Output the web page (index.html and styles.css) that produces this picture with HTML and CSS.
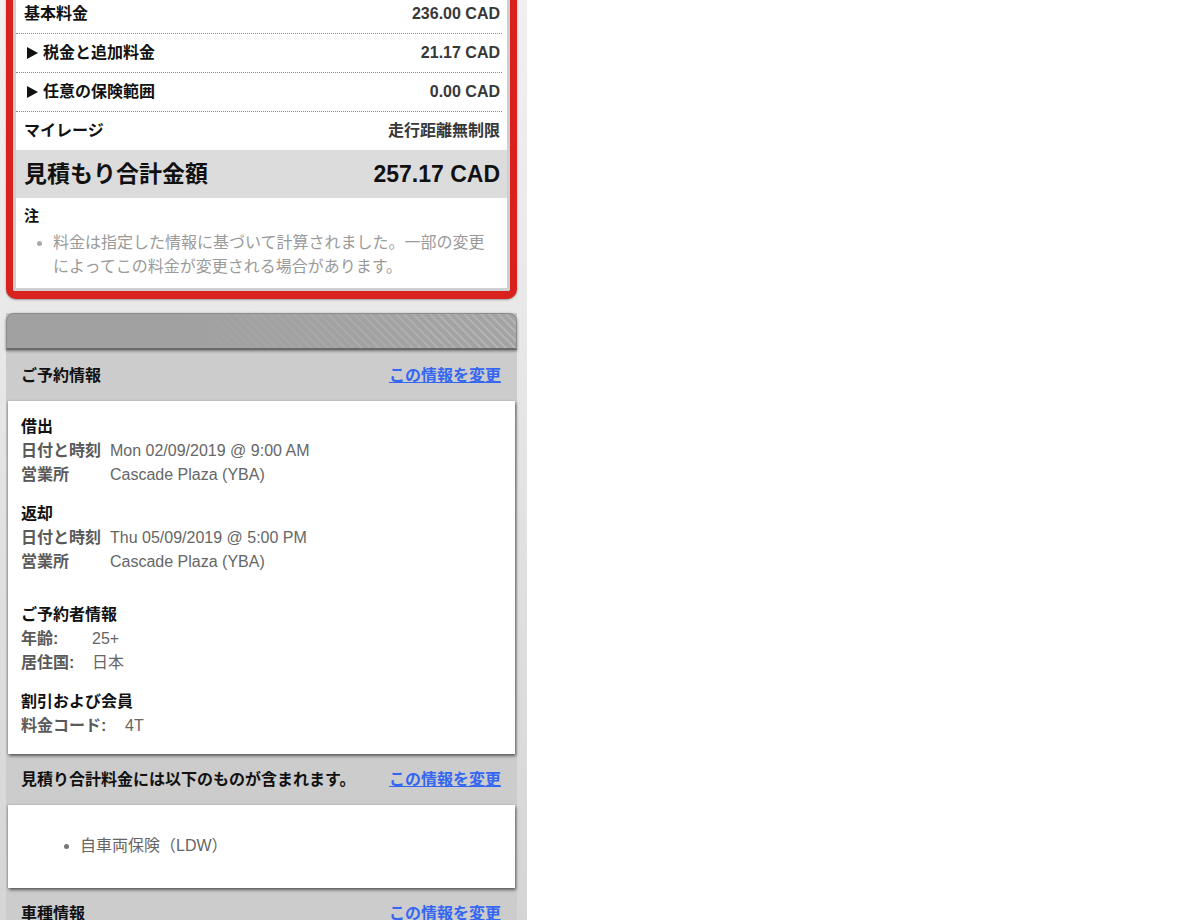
FILE: index.html
```html
<!DOCTYPE html>
<html lang="ja">
<head>
<meta charset="utf-8">
<title>見積もり</title>
<link rel="stylesheet" href="styles.css">
</head>
<body>
<div class="column">
  <section class="quote">
    <div class="quote-inner">
      <div class="fee-row"><span class="fee-label">基本料金</span><span class="fee-value">236.00 CAD</span></div>
      <div class="fee-row"><span class="fee-label toggle">税金と追加料金</span><span class="fee-value">21.17 CAD</span></div>
      <div class="fee-row"><span class="fee-label toggle">任意の保険範囲</span><span class="fee-value">0.00 CAD</span></div>
      <div class="fee-row last"><span class="fee-label">マイレージ</span><span class="fee-value">走行距離無制限</span></div>
      <div class="total-row"><span>見積もり合計金額</span><span>257.17 CAD</span></div>
      <div class="note">
        <div class="note-title">注</div>
        <ul class="note-list"><li>料金は指定した情報に基づいて計算されました。一部の変更によってこの料金が変更される場合があります。</li></ul>
      </div>
    </div>
  </section>

  <section class="panel">
    <div class="panel-bar"></div>
    <div class="panel-head"><h3>ご予約情報</h3><a href="#">この情報を変更</a></div>
    <div class="panel-body">
      <div class="info-block">
        <div class="info-title">借出</div>
        <div class="info-grid grid-rental">
          <span class="info-label">日付と時刻</span><span class="info-value">Mon 02/09/2019 @ 9:00 AM</span>
          <span class="info-label">営業所</span><span class="info-value">Cascade Plaza (YBA)</span>
        </div>
      </div>
      <div class="info-block gap-small">
        <div class="info-title">返却</div>
        <div class="info-grid grid-rental">
          <span class="info-label">日付と時刻</span><span class="info-value">Thu 05/09/2019 @ 5:00 PM</span>
          <span class="info-label">営業所</span><span class="info-value">Cascade Plaza (YBA)</span>
        </div>
      </div>
      <div class="info-block gap-large">
        <div class="info-title">ご予約者情報</div>
        <div class="info-grid grid-renter">
          <span class="info-label">年齢:</span><span class="info-value">25+</span>
          <span class="info-label">居住国:</span><span class="info-value">日本</span>
        </div>
      </div>
      <div class="info-block gap-small">
        <div class="info-title">割引および会員</div>
        <div class="info-grid grid-discount">
          <span class="info-label">料金コード:</span><span class="info-value">4T</span>
        </div>
      </div>
    </div>
    <div class="panel-head"><h3>見積り合計料金には以下のものが含まれます。</h3><a href="#">この情報を変更</a></div>
    <div class="panel-body compact">
      <ul class="included-list"><li>自車両保険（LDW）</li></ul>
    </div>
    <div class="panel-head"><h3>車種情報</h3><a href="#">この情報を変更</a></div>
  </section>
</div>
</body>
</html>
```

FILE: styles.css
```css
* { box-sizing: border-box; }
html, body { margin: 0; padding: 0; background: #fff; }
body {
  font-family: "Liberation Sans", "Noto Sans CJK JP", Arial, sans-serif;
  font-size: 16px;
  color: #111;
  overflow: hidden;
  height: 920px;
}

.column {
  width: 527px;
  min-height: 920px;
  padding: 0 10px 0 6px;
  background: linear-gradient(#f0f0f0 0, #e9e9e9 300px, #d5d5d5 920px);
  overflow: hidden;
}

/* Quote box */
.quote {
  margin-top: -12px;
  border: 7px solid #d9221d;
  border-bottom-width: 8px;
  border-radius: 0 0 10px 10px;
  background: #fff;
  box-shadow: 0 1px 2px rgba(0, 0, 0, .35);
}
.quote-inner {
  border: 3px solid #cfcfcf;
  border-top: 0;
  border-radius: 0 0 3px 3px;
  background: #fff;
}
.fee-row {
  display: flex;
  justify-content: space-between;
  align-items: center;
  padding: 8px 2px 8px 8px;
  margin-right: 5px;
  line-height: 22px;
  border-bottom: 1px dotted #8a8a8a;
}
.fee-row.last { border-bottom: 0; }
.fee-label { font-weight: bold; color: #111; }
.fee-value { font-weight: bold; color: #383838; }
.toggle::before {
  content: "";
  display: inline-block;
  width: 0;
  height: 0;
  border-top: 6px solid transparent;
  border-bottom: 6px solid transparent;
  border-left: 11px solid #111;
  margin: 0 5px 0 3px;
  vertical-align: -1px;
}
.total-row {
  display: flex;
  justify-content: space-between;
  align-items: center;
  padding: 8px 7px 8px 8px;
  background: #dcdcdc;
  font-size: 23px;
  font-weight: bold;
  line-height: 32px;
  color: #111;
}
.note { padding: 8px 14px 9px 8px; }
.note-title { font-size: 15px; font-weight: bold; line-height: 20px; color: #111; }
.note-list {
  margin: 5px 0 0;
  padding-left: 29px;
  color: #9a9a9a;
  line-height: 24px;
}
.note-list li::marker { color: #aaa; }

/* Panel */
.panel {
  margin-top: 14px;
  background: #cccccc;
}
.panel-bar {
  position: relative;
  z-index: 1;
  height: 37px;
  border: 1px solid #8c8c8c;
  border-bottom: 2px solid #6a6a6a;
  border-radius: 8px 8px 0 0;
  background:
    linear-gradient(to right, #a1a1a1 35%, rgba(161, 161, 161, 0) 100%),
    repeating-linear-gradient(45deg, #a3a3a3 0 4px, #b4b4b4 4px 6px);
  box-shadow: 0 1px 3px rgba(0, 0, 0, .45);
}
.panel-head {
  height: 51px;
  display: flex;
  align-items: center;
  justify-content: space-between;
  padding: 0 16px 3px 15px;
}
.panel-head h3 {
  margin: 0;
  font-size: 16px;
  font-weight: bold;
  color: #111;
}
.panel-head a {
  color: #3566f2;
  font-weight: bold;
  text-decoration: underline;
}
.panel-body {
  position: relative;
  z-index: 1;
  margin: 0 2px;
  padding: 14px 13px 16px;
  background: #fff;
  box-shadow: 1px 2px 3px rgba(0, 0, 0, .55), -1px 0 2px rgba(0, 0, 0, .15);
}
.panel-body.compact { padding: 29px 13px 30px; }

.info-block { line-height: 24px; }
.info-block.gap-small { margin-top: 15px; }
.info-block.gap-large { margin-top: 29px; }
.info-title { font-weight: bold; color: #111; }
.info-grid { display: grid; }
.grid-rental { grid-template-columns: 89px 1fr; }
.grid-renter { grid-template-columns: 71px 1fr; }
.grid-discount { grid-template-columns: 104px 1fr; }
.info-label { font-weight: bold; color: #5a5a5a; }
.info-value { color: #666; }

.included-list {
  margin: 0;
  padding-left: 59px;
  line-height: 24px;
  color: #666;
}
.included-list li::marker { color: #777; }
```
